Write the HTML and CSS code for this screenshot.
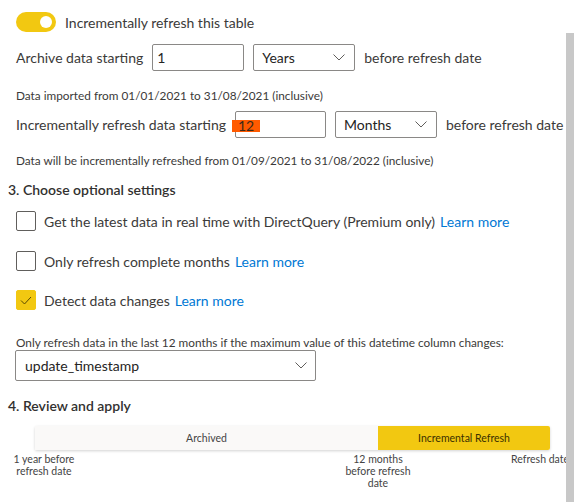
FILE: index.html
```html
<!DOCTYPE html>
<html>
<head>
<meta charset="utf-8">
<link rel="stylesheet" href="styles.css">
</head>
<body>
<div class="frame">
  <div class="content">
    <div class="row toggle-row">
      <span class="toggle"><span class="knob"></span></span>
      <span class="label">Incrementally refresh this table</span>
    </div>

    <div class="row field-row archive-row">
      <span class="label">Archive data starting</span>
      <span class="input w-archive">1</span>
      <span class="select w-unit"><span>Years</span><svg class="chev" width="12" height="7" viewBox="0 0 12 7"><path d="M0.5 0.5 L6 6 L11.5 0.5" fill="none" stroke="#605e5c" stroke-width="1"/></svg></span>
      <span class="label">before refresh date</span>
    </div>

    <div class="note note-1">Data imported from 01/01/2021 to 31/08/2021 (inclusive)</div>

    <div class="row field-row refresh-row">
      <span class="label">Incrementally refresh data starting</span>
      <span class="input w-refresh"><span class="mark">12</span></span>
      <span class="select w-unit"><span>Months</span><svg class="chev" width="12" height="7" viewBox="0 0 12 7"><path d="M0.5 0.5 L6 6 L11.5 0.5" fill="none" stroke="#605e5c" stroke-width="1"/></svg></span>
      <span class="label">before refresh date</span>
    </div>

    <div class="note note-2">Data will be incrementally refreshed from 01/09/2021 to 31/08/2022 (inclusive)</div>

    <div class="heading h-3">3. Choose optional settings</div>

    <div class="row check-row c1">
      <span class="box"></span>
      <span class="label">Get the latest data in real time with DirectQuery (Premium only)</span>
      <a class="link">Learn more</a>
    </div>
    <div class="row check-row c2">
      <span class="box"></span>
      <span class="label">Only refresh complete months</span>
      <a class="link">Learn more</a>
    </div>
    <div class="row check-row c3">
      <span class="box checked"><svg width="12" height="9" viewBox="0 0 12 9"><path d="M1 4.5 L4.5 8 L11 1" fill="none" stroke="#5a4a00" stroke-width="1"/></svg></span>
      <span class="label">Detect data changes</span>
      <a class="link">Learn more</a>
    </div>

    <div class="note note-3">Only refresh data in the last 12 months if the maximum value of this datetime column changes:</div>
    <div class="select col-select"><span>update_timestamp</span><svg class="chev" width="12" height="7" viewBox="0 0 12 7"><path d="M0.5 0.5 L6 6 L11.5 0.5" fill="none" stroke="#605e5c" stroke-width="1"/></svg></div>

    <div class="heading h-4">4. Review and apply</div>

    <div class="timeline">
      <div class="seg archived">Archived</div>
      <div class="seg incremental">Incremental Refresh</div>
    </div>
    <div class="tl-labels">
      <div class="tl-label l1">1 year before<br>refresh date</div>
      <div class="tl-label l2">12 months<br>before refresh<br>date</div>
      <div class="tl-label l3">Refresh date</div>
    </div>
  </div>
  <div class="scrollbar"></div>
</div>
</body>
</html>
```

FILE: styles.css
```css
html, body {
  margin: 0;
  padding: 0;
  background: #ffffff;
}
body {
  font-family: "Lato", "Open Sans", sans-serif;
  color: #3b3a39;
  width: 578px;
  height: 502px;
  overflow: hidden;
}
.frame {
  display: flex;
  width: 578px;
  height: 502px;
}
.content {
  width: 566px;
  display: flex;
  flex-direction: column;
  padding-left: 8px;
  box-sizing: border-box;
}
.scrollbar {
  width: 8px;
  margin-top: 33px;
  height: 469px;
  background: #c8c8c8;
  position: relative;
  z-index: 1;
}
.row {
  display: flex;
  align-items: center;
}
.label {
  font-size: 14px;
  white-space: nowrap;
}
.toggle-row {
  margin-top: 12px;
  margin-left: 8px;
  height: 20px;
}
.toggle {
  width: 40px;
  height: 20px;
  border-radius: 10px;
  background: #f2c811;
  display: flex;
  align-items: center;
  justify-content: flex-end;
  padding-right: 4px;
  box-sizing: border-box;
  margin-right: 9px;
}
.knob {
  width: 12px;
  height: 12px;
  border-radius: 50%;
  background: #ffffff;
}
.field-row {
  margin-left: 8px;
  height: 27px;
}
.archive-row {
  margin-top: 12px;
}
.refresh-row {
  margin-top: 10px;
}
.input, .select {
  height: 27px;
  box-sizing: border-box;
  border: 1px solid #8a8886;
  border-radius: 2px;
  font-size: 14px;
  display: flex;
  align-items: center;
  color: #252423;
}
.input {
  padding-left: 4px;
}
.w-archive {
  width: 92px;
  margin-left: 9px;
  margin-right: 9px;
}
.w-refresh {
  width: 91px;
  margin-left: 9px;
  margin-right: 9px;
  padding-left: 0;
}
.mark {
  background: #ff5a00;
  color: #3b2a1a;
  height: 12px;
  line-height: 12px;
  width: 28px;
  margin-left: -4px;
  padding-left: 6px;
  box-sizing: border-box;
  margin-top: 3px;
}
.select {
  justify-content: space-between;
  padding: 0 9px 0 8px;
}
.w-unit {
  width: 102px;
  margin-right: 9px;
}
.chev {
  display: block;
}
.note {
  font-size: 11.8px;
  margin-left: 8px;
  white-space: nowrap;
}
.note-1 {
  margin-top: 17px;
  height: 13px;
}
.note-2 {
  margin-top: 15px;
  height: 13px;
}
.heading {
  font-size: 14px;
  font-weight: 600;
  color: #323130;
  height: 18px;
}
.h-3 {
  margin-top: 15px;
}
.check-row {
  margin-left: 8px;
  height: 20px;
}
.c1 { margin-top: 12px; }
.c2 { margin-top: 20px; }
.c3 { margin-top: 19px; }
.box {
  width: 20px;
  height: 20px;
  box-sizing: border-box;
  border: 1px solid #605e5c;
  border-radius: 2px;
  margin-right: 8px;
  display: flex;
  align-items: center;
  justify-content: center;
}
.box.checked {
  background: #f2c811;
  border-color: #f2c811;
}
.link {
  color: #0078d4;
  font-size: 14px;
  margin-left: 5px;
  white-space: nowrap;
}
.note-3 {
  margin-top: 25px;
  height: 14px;
}
.col-select {
  width: 301px;
  height: 31px;
  margin-left: 7px;
  margin-top: 1px;
  padding-left: 9px;
  padding-right: 8px;
}
.h-4 {
  margin-top: 16px;
}
.timeline {
  display: flex;
  width: 515px;
  height: 24px;
  margin-left: 27px;
  margin-top: 11px;
  box-shadow: 0 1px 3px rgba(0,0,0,0.18);
  border-radius: 2px;
  font-size: 10.5px;
}
.seg {
  display: flex;
  align-items: center;
  justify-content: center;
}
.archived {
  width: 343px;
  background: #faf9f8;
  color: #444;
}
.incremental {
  flex: 1;
  background: #f2c811;
  color: #3b3000;
  border-radius: 0 2px 2px 0;
}
.tl-labels {
  display: flex;
  margin-left: -8px;
  margin-top: 3px;
  font-size: 10.5px;
  line-height: 12px;
  color: #444;
}
.tl-label {
  text-align: center;
}
.l1 { width: 88px; }
.l2 { width: 80px; margin-left: 250px; }
.l3 { margin-left: auto; margin-right: -3px; text-align: right; white-space: nowrap; }
```
